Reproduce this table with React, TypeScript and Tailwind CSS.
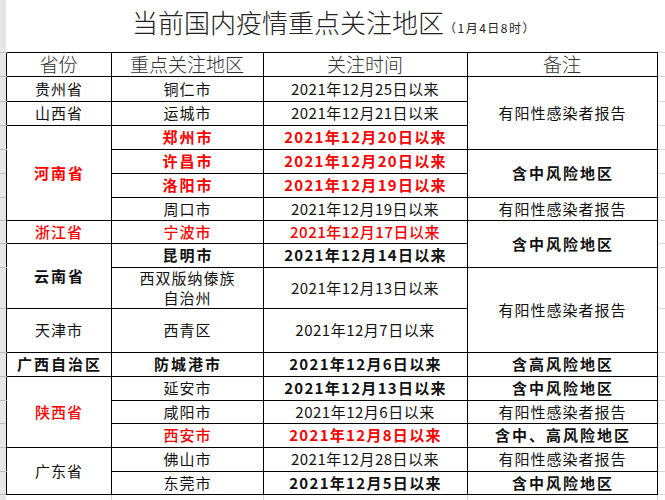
import clsx from "clsx";

type Cell = {
  text: string;
  span?: number;
  red?: boolean;
  bold?: boolean;
  date?: boolean;
};
type Row = { h: string; prov?: Cell; area: Cell; date: Cell; note?: Cell };

const rows: Row[] = [
  {
    h: "h-[25px]",
    prov: { text: "贵州省" },
    area: { text: "铜仁市" },
    date: { text: "2021年12月25日以来" },
    note: { text: "有阳性感染者报告", span: 3 },
  },
  {
    h: "h-[24px]",
    prov: { text: "山西省" },
    area: { text: "运城市" },
    date: { text: "2021年12月21日以来" },
  },
  {
    h: "h-[24px]",
    prov: { text: "河南省", span: 4, red: true, bold: true },
    area: { text: "郑州市", red: true, bold: true },
    date: { text: "2021年12月20日以来", red: true, bold: true },
  },
  {
    h: "h-[24px]",
    area: { text: "许昌市", red: true, bold: true },
    date: { text: "2021年12月20日以来", red: true, bold: true },
    note: { text: "含中风险地区", span: 2, bold: true },
  },
  {
    h: "h-[24px]",
    area: { text: "洛阳市", red: true, bold: true },
    date: { text: "2021年12月19日以来", red: true, bold: true },
  },
  {
    h: "h-[23px]",
    area: { text: "周口市" },
    date: { text: "2021年12月19日以来" },
    note: { text: "有阳性感染者报告" },
  },
  {
    h: "h-[23px]",
    prov: { text: "浙江省", red: true },
    area: { text: "宁波市", red: true },
    date: { text: "2021年12月17日以来", red: true },
    note: { text: "含中风险地区", span: 2, bold: true },
  },
  {
    h: "h-[24px]",
    prov: { text: "云南省", span: 2, bold: true },
    area: { text: "昆明市", bold: true },
    date: { text: "2021年12月14日以来", bold: true },
  },
  {
    h: "h-[40px]",
    area: { text: "西双版纳傣族\n自治州" },
    date: { text: "2021年12月13日以来" },
    note: { text: "有阳性感染者报告", span: 2 },
  },
  {
    h: "h-[44px]",
    prov: { text: "天津市" },
    area: { text: "西青区" },
    date: { text: "2021年12月7日以来" },
  },
  {
    h: "h-[24px]",
    prov: { text: "广西自治区", bold: true },
    area: { text: "防城港市", bold: true },
    date: { text: "2021年12月6日以来", bold: true },
    note: { text: "含高风险地区", bold: true },
  },
  {
    h: "h-[24px]",
    prov: { text: "陕西省", span: 3, red: true },
    area: { text: "延安市" },
    date: { text: "2021年12月13日以来", bold: true },
    note: { text: "含中风险地区", bold: true },
  },
  {
    h: "h-[23px]",
    area: { text: "咸阳市" },
    date: { text: "2021年12月6日以来" },
    note: { text: "有阳性感染者报告" },
  },
  {
    h: "h-[24px]",
    area: { text: "西安市", red: true },
    date: { text: "2021年12月8日以来", red: true, bold: true },
    note: { text: "含中、高风险地区", bold: true },
  },
  {
    h: "h-[24px]",
    prov: { text: "广东省", span: 2 },
    area: { text: "佛山市" },
    date: { text: "2021年12月28日以来" },
    note: { text: "有阳性感染者报告" },
  },
  {
    h: "h-[23px]",
    area: { text: "东莞市" },
    date: { text: "2021年12月5日以来", bold: true },
    note: { text: "含中风险地区", bold: true },
  },
];

function spacing(cell: Cell) {
  if (cell.date) return cell.bold ? "tracking-[1.3px] pl-[1px]" : "tracking-[0.5px]";
  return cell.bold ? "tracking-[2px] pl-[2px]" : "tracking-[1px] pl-[1px]";
}

function DataCell({ cell }: { cell: Cell }) {
  return (
    <td
      rowSpan={cell.span}
      className={clsx(
        "border border-black text-center text-[15px] leading-[20px] whitespace-pre-line",
        cell.red ? "text-[#f00]" : "text-[#111]",
        cell.bold ? "font-bold" : cell.red ? "font-medium" : "font-normal",
        spacing(cell),
      )}
    >
      {cell.text}
    </td>
  );
}

const gutter = "bg-[#e6e6e6] border-b border-[#bdbdbd]";
const edge = "bg-white border-b border-[#dadada]";

export default function App() {
  return (
    <div className="h-[500px] w-[665px] overflow-hidden bg-white font-['Noto_Sans_CJK_SC',sans-serif]">
      <table className="w-[665px] table-fixed">
        <colgroup>
          <col className="w-[6px]" />
          <col className="w-[105px]" />
          <col className="w-[152px]" />
          <col className="w-[204px]" />
          <col className="w-[190px]" />
          <col className="w-[8px]" />
        </colgroup>
        <tbody>
          <tr className="h-[52px]">
            <td className={gutter} />
            <td colSpan={4} className="border-b border-black pl-[126px] pt-[7px] align-top">
              <div className="flex items-baseline text-[#222]">
                <span className="text-[26px] leading-[30px] font-light">
                  当前国内疫情重点关注地区
                </span>
                <span className="text-[12px] leading-none tracking-[1.5px]">（1月4日8时）</span>
              </div>
            </td>
            <td className={edge} />
          </tr>
          <tr className="h-[24px]">
            <td className={gutter} />
            {["省份", "重点关注地区", "关注时间", "备注"].map((t) => (
              <td
                key={t}
                className="border border-black text-center text-[19px] leading-[20px] font-light text-[#333]"
              >
                {t}
              </td>
            ))}
            <td className={edge} />
          </tr>
          {rows.map((r, i) => (
            <tr key={i} className={r.h}>
              <td className={gutter} />
              {r.prov ? <DataCell cell={r.prov} /> : null}
              <DataCell cell={r.area} />
              <DataCell cell={{ ...r.date, date: true }} />
              {r.note ? <DataCell cell={r.note} /> : null}
              <td className={edge} />
            </tr>
          ))}
          <tr className="h-[8px]">
            <td className="bg-[#e6e6e6]" />
            <td className="border-r border-[#d4d4d4]" />
            <td className="border-r border-[#d4d4d4]" />
            <td className="border-r border-[#d4d4d4]" />
            <td className="border-r border-[#d4d4d4]" />
            <td />
          </tr>
        </tbody>
      </table>
    </div>
  );
}
